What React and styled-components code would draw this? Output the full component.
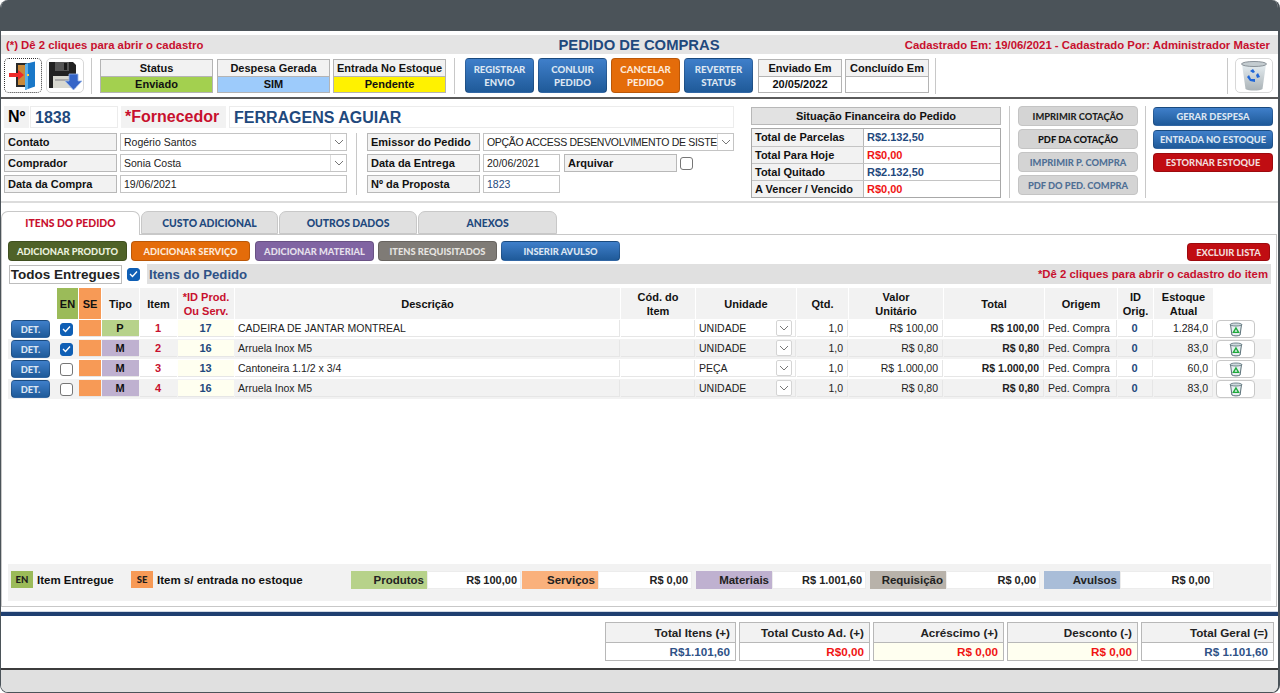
import React from 'react';
import styled, { createGlobalStyle } from 'styled-components';

const GlobalStyle = createGlobalStyle`
  html, body { margin: 0; padding: 0; background: #fff; }
  body { font-family: 'Liberation Sans', Arial, sans-serif; }
  * { box-sizing: border-box; }
`;

const Window = styled.div`
  width: 1280px;
  height: 693px;
  display: flex;
  flex-direction: column;
  overflow: hidden;
  background: #fff;
  border-left: 1px solid #4b5359;
  border-right: 2px solid #4b5359;
  border-bottom: 1px solid #4b5359;
  border-radius: 8px;
`;

const TopBar = styled.div`
  height: 31px;
  flex: none;
  background: #4b5359;
`;

const TitleBar = styled.div`
  height: 19px;
  margin-top: 4px;
  flex: none;
  display: grid;
  grid-template-columns: 1fr auto 1fr;
  align-items: center;
  padding: 0 8px 0 5px;
  background: #e4e4e4;
`;

const Hint = styled.span`
  color: #c8102e;
  font-size: 11.35px;
  font-weight: bold;
  text-align: ${p => p.$align || 'left'};
  white-space: nowrap;
`;

const Title = styled.span`
  color: #1f497d;
  font-size: 14.8px;
  font-weight: bold;
  margin-left: 2px;
`;

const Toolbar = styled.div`
  height: 45px;
  flex: none;
  display: flex;
  align-items: center;
  padding: 0 5px 0 3px;
  border-bottom: 2px solid #5a5a5a;
`;

const IconButton = styled.div`
  width: 38px;
  height: 35px;
  flex: none;
  display: flex;
  align-items: center;
  justify-content: center;
  margin-left: ${p => p.$ml || 0}px;
  border: ${p => (p.$dotted ? '1px dotted #333' : '1px solid #d8d8d8')};
  border-radius: 5px;
  background: #fff;
`;

const VSep = styled.div`
  width: 1px;
  flex: none;
  height: ${p => p.$h || 36}px;
  margin-left: ${p => p.$ml || 0}px;
  margin-right: ${p => p.$mr || 0}px;
  background: #c8c8c8;
`;

const StatusCard = styled.div`
  width: ${p => p.$w || 113}px;
  height: 34px;
  flex: none;
  margin-left: ${p => p.$ml || 0}px;
  display: flex;
  flex-direction: column;
  border: 1px solid #b4b4b4;
  font-size: 11px;
  font-weight: bold;
  color: #111;
  text-align: center;
`;

const StatusHead = styled.div`
  height: 17px;
  line-height: 16px;
  background: #f2f2f2;
  border-bottom: 1px solid #b4b4b4;
  white-space: nowrap;
`;

const StatusValue = styled.div`
  flex: 1;
  line-height: 15px;
  background: ${p => p.$bg || '#fff'};
`;

const GRADS = {
  blue: 'linear-gradient(#3f7fca, #1f5a99)',
  orange: '#e46c0a',
  red: '#c00d12',
  olive: '#4f6228',
  purple: '#8064a2',
  grey: '#7f7b76',
  light: '#d4d4d4',
};

const Btn = styled.div`
  width: ${p => p.$w}px;
  height: ${p => p.$h}px;
  flex: none;
  margin-left: ${p => p.$ml || 0}px;
  display: flex;
  align-items: center;
  justify-content: center;
  text-align: center;
  font-family: Lato, 'Open Sans', sans-serif;
  font-size: ${p => p.$fs || 9.3}px;
  font-weight: 900;
  line-height: 13px;
  white-space: nowrap;
  color: ${p => p.$color || '#dce6f2'};
  background: ${p => GRADS[p.$kind]};
  border: 1px solid ${p => (p.$kind === 'light' ? '#c4c4c4' : 'rgba(0,0,0,0.18)')};
  border-radius: 4px;
`;

const FormArea = styled.div`
  height: 104px;
  flex: none;
  display: flex;
  padding: 7px 0 0 3px;
  border-bottom: 2px solid #dcdcdc;
`;

const LeftForm = styled.div`
  width: 730px;
  flex: none;
  display: flex;
  flex-direction: column;
`;

const HeadRow = styled.div`
  height: 22px;
  display: flex;
  align-items: stretch;
`;

const BigLabel = styled.div`
  width: ${p => p.$w}px;
  flex: none;
  margin-left: ${p => p.$ml || 0}px;
  padding-left: ${p => p.$pl || 4}px;
  background: #f2f2f2;
  font-size: 16px;
  line-height: 22px;
  font-weight: bold;
  color: ${p => p.$color || '#000'};
  white-space: nowrap;
`;

const BigValue = styled.div`
  width: ${p => p.$w}px;
  flex: none;
  margin-left: ${p => p.$ml || 0}px;
  padding-left: 4px;
  border: 1px solid #ececec;
  font-size: 16px;
  line-height: 21px;
  font-weight: bold;
  color: #1f497d;
`;

const FormColumns = styled.div`
  margin-top: 5px;
  display: flex;
`;

const FieldColumn = styled.div`
  display: flex;
  flex-direction: column;
  gap: 3px;
`;

const FieldRow = styled.div`
  height: 18px;
  display: flex;
`;

const FieldLabel = styled.div`
  width: ${p => p.$w || 113}px;
  flex: none;
  margin-left: ${p => p.$ml || 0}px;
  padding-left: 3px;
  background: #f2f2f2;
  border: 1px solid #b8b8b8;
  font-size: 11px;
  line-height: 16px;
  font-weight: bold;
  color: #111;
  white-space: nowrap;
`;

const FieldValue = styled.div`
  width: ${p => p.$w}px;
  flex: none;
  margin-left: ${p => p.$ml ?? 3}px;
  padding-left: 3px;
  border: 1px solid #c4c4c4;
  background: #fff;
  font-size: 10.5px;
  line-height: 16px;
  color: ${p => p.$color || '#222'};
  white-space: nowrap;
  overflow: hidden;
  display: flex;
  justify-content: space-between;
`;

const ClipText = styled.span`
  white-space: nowrap;
  letter-spacing: ${p => (p.$tight ? '-0.3px' : 'normal')};
`;

const ComboBtn = styled.span`
  width: 16px;
  flex: none;
  display: flex;
  align-items: center;
  justify-content: center;
  background: #fff;
  border-left: 1px solid #dcdcdc;
`;

const Finance = styled.div`
  width: 250px;
  flex: none;
  margin-left: 17px;
  padding-top: 1px;
`;

const FinanceHead = styled.div`
  height: 18px;
  background: #e2e2e2;
  border: 1px solid #b8b8b8;
  text-align: center;
  font-size: 11px;
  font-weight: bold;
  line-height: 16px;
  color: #111;
`;

const FinanceTable = styled.div`
  margin-top: 3px;
  border: 1px solid #a8a8a8;
`;

const FinanceRow = styled.div`
  height: 17px;
  display: flex;
  border-top: ${p => (p.$first ? 'none' : '1px solid #c4c4c4')};
`;

const FinanceLabel = styled.div`
  width: 112px;
  flex: none;
  padding-left: 3px;
  background: #f2f2f2;
  border-right: 1px solid #b8b8b8;
  font-size: 11px;
  line-height: 16px;
  font-weight: bold;
  color: #111;
  white-space: nowrap;
`;

const FinanceValue = styled.div`
  flex: 1;
  padding-left: 3px;
  font-size: 11px;
  line-height: 16px;
  font-weight: bold;
  color: ${p => (p.$red ? '#f01414' : '#1f497d')};
`;

const ButtonStack = styled.div`
  display: flex;
  flex-direction: column;
  gap: ${p => p.$gap || 3}px;
  margin-left: ${p => p.$ml || 0}px;
  padding-top: ${p => p.$pt || 0}px;
`;

const Tabs = styled.div`
  height: 23px;
  margin-top: 8px;
  flex: none;
  display: flex;
  gap: 1px;
  position: relative;
  z-index: 1;
`;

const Tab = styled.div`
  width: ${p => p.$w}px;
  height: ${p => (p.$active ? 24 : 23)}px;
  text-align: center;
  font-family: Lato, 'Open Sans', sans-serif;
  font-size: 10.4px;
  font-weight: 900;
  line-height: 22px;
  color: ${p => (p.$active ? '#c8102e' : '#1f497d')};
  background: ${p => (p.$active ? '#fff' : '#e0e0e0')};
  border: 1px solid #c8c8c8;
  border-bottom: ${p => (p.$active ? 'none' : '1px solid #c8c8c8')};
  border-radius: 7px 7px 0 0;
`;

const Panel = styled.div`
  height: 373px;
  flex: none;
  margin-right: 1px;
  display: flex;
  flex-direction: column;
  padding: 6px 5px 5px 6px;
  border: 1px solid #c8c8c8;
`;

const ButtonRow = styled.div`
  height: 20px;
  flex: none;
  display: flex;
  align-items: flex-end;
`;

const SectionRow = styled.div`
  height: 20px;
  margin-top: 3px;
  flex: none;
  display: flex;
  align-items: center;
  padding-left: 1px;
`;

const TodosBox = styled.div`
  width: 113px;
  height: 19px;
  flex: none;
  text-align: center;
  font-size: 13.5px;
  font-weight: bold;
  line-height: 17px;
  color: #222;
  border: 1px solid #bdbdbd;
`;

const SectionBar = styled.div`
  flex: 1;
  height: 20px;
  margin-left: 7px;
  padding: 0 3px 0 2px;
  display: flex;
  align-items: center;
  justify-content: space-between;
  background: #e0e0e0;
`;

const SectionTitle = styled.span`
  font-size: 13.2px;
  font-weight: bold;
  color: #2f5287;
`;

const COLS = '49px 22px 23px 38px 38px 57px 386px 75px 101px 52px 95px 101px 73px 36px 60px 56px';

const HeadGrid = styled.div`
  display: grid;
  grid-template-columns: ${COLS};
  height: 31px;
  margin-top: 4px;
  flex: none;
`;

const HeadCell = styled.div`
  display: flex;
  align-items: center;
  justify-content: center;
  text-align: center;
  margin-right: 1px;
  padding: 0 1px;
  font-size: 11px;
  line-height: 14px;
  font-weight: bold;
  color: ${p => p.$color || '#111'};
  background: ${p => p.$bg || '#f2f2f2'};
`;

const RowGrid = styled.div`
  display: grid;
  grid-template-columns: ${COLS};
  height: 20px;
  flex: none;
  padding: 1px 0 2px;
  background: ${p => (p.$alt ? '#f2f2f2' : '#fff')};
`;

const Cell = styled.div`
  display: flex;
  align-items: center;
  justify-content: ${p => p.$justify || 'flex-start'};
  margin-right: 1px;
  padding: 0 4px 0 3px;
  overflow: hidden;
  white-space: nowrap;
  font-size: ${p => p.$fs || 10.5}px;
  font-weight: ${p => (p.$bold ? 'bold' : 'normal')};
  color: ${p => p.$color || '#222'};
  background: ${p => p.$bg || 'transparent'};
  border-bottom: 1px solid #e6e6e6;
  border-right: ${p => (p.$line ? '1px solid #e6e6e6' : 'none')};
`;

const PlainCell = styled.div`
  display: flex;
  align-items: center;
  justify-content: ${p => p.$justify || 'flex-start'};
  padding-left: ${p => p.$pl || 0}px;
  margin-top: -1px;
  margin-bottom: -2px;
`;

const TrashBtn = styled.div`
  width: 39px;
  height: 18px;
  margin-left: 2px;
  display: flex;
  align-items: center;
  justify-content: center;
  background: #fff;
  border: 1px solid #c8c8c8;
  border-radius: 4px;
`;

const CheckShell = styled.div`
  width: 13px;
  height: 13px;
  flex: none;
  margin-left: ${p => p.$ml || 0}px;
  display: flex;
  align-items: center;
  justify-content: center;
  border-radius: 3px;
  background: ${p => (p.$on ? '#0f5fb5' : '#fff')};
  border: 1px solid ${p => (p.$on ? '#0f5fb5' : '#767676')};
`;

const CheckWrap = styled.div`
  margin-left: 3px;
  display: flex;
  align-items: center;
`;

const ComboMini = styled.span`
  width: 16px;
  height: 16px;
  flex: none;
  margin-left: auto;
  margin-right: -1px;
  display: flex;
  align-items: center;
  justify-content: center;
  background: #fff;
  border: 1px solid #d4d4d4;
  border-radius: 2px;
`;

const Legend = styled.div`
  height: 37px;
  margin-top: auto;
  flex: none;
  display: flex;
  align-items: center;
  padding: 0 0 6px 3px;
  background: #f2f2f2;
`;

const LegendChip = styled.div`
  width: 22px;
  height: 17px;
  flex: none;
  text-align: center;
  font-family: Lato, sans-serif;
  font-size: 9.5px;
  font-weight: 900;
  line-height: 17px;
  color: #1d1d1d;
  background: ${p => p.$bg};
`;

const LegendText = styled.span`
  margin-left: 4px;
  width: ${p => p.$w}px;
  flex: none;
  font-size: 11.5px;
  font-weight: bold;
  color: #111;
  white-space: nowrap;
`;

const SumLabel = styled.div`
  width: 76px;
  height: 18px;
  flex: none;
  margin-left: ${p => p.$ml || 0}px;
  padding-right: 3px;
  text-align: right;
  font-size: 11.5px;
  line-height: 18px;
  font-weight: bold;
  color: #222;
  background: ${p => p.$bg};
`;

const SumValue = styled.div`
  width: 94px;
  height: 18px;
  flex: none;
  padding-right: 3px;
  text-align: right;
  font-size: 11px;
  line-height: 17px;
  font-weight: bold;
  color: #222;
  background: #fff;
  border: 1px solid #ececec;
`;

const BlueLine = styled.div`
  height: 5px;
  margin-top: 4px;
  flex: none;
  background: #1f3f70;
  border-top: 1px solid #d0d8e4;
`;

const TotalsRow = styled.div`
  height: 54px;
  flex: none;
  display: flex;
  gap: 3px;
  padding: 6px 0 0 604px;
  border-bottom: 2px solid #3c3c3c;
`;

const TotalBox = styled.div`
  width: ${p => p.$w || 131}px;
  height: 39px;
  flex: none;
  display: flex;
  flex-direction: column;
  border: 1px solid #b8b8b8;
  text-align: right;
`;

const TotalHead = styled.div`
  height: 20px;
  padding-right: 5px;
  background: #f2f2f2;
  border-bottom: 1px solid #b8b8b8;
  font-size: 11.7px;
  line-height: 19px;
  font-weight: bold;
  color: #222;
`;

const TotalValue = styled.div`
  flex: 1;
  padding-right: 5px;
  background: ${p => p.$bg || '#fff'};
  font-size: 11.7px;
  line-height: 17px;
  font-weight: bold;
  color: ${p => (p.$red ? '#f01414' : '#2f5287')};
`;

const Footer = styled.div`
  flex: 1;
  background: #e0e0e0;
`;

const Chevron = () => (
  <svg width="10" height="6" viewBox="0 0 10 6">
    <path d="M1 1l4 4 4-4" fill="none" stroke="#777" strokeWidth="1" />
  </svg>
);

const Check = ({ on, ml }) => (
  <CheckShell $on={on} $ml={ml}>
    {on && (
      <svg width="9" height="8" viewBox="0 0 9 8">
        <path d="M1 4l2.5 2.5L8 1.5" fill="none" stroke="#fff" strokeWidth="1.3" />
      </svg>
    )}
  </CheckShell>
);

const DoorIcon = () => (
  <svg width="32" height="31" viewBox="0 0 32 31">
    <rect x="9" y="3" width="18" height="24" fill="#2a2a2a" />
    <rect x="11" y="5" width="8" height="20" fill="#c98a3a" />
    <path d="M18 4l10-2.5v25L18 30z" fill="#1a78c8" />
    <path d="M18 4l3-.8v25.6L18 30z" fill="#5ab0ea" />
    <rect x="20" y="14" width="2" height="2" fill="#ffd34d" />
    <path d="M2 13h9V10l6 5-6 5v-3H2z" fill="#ee2a2a" />
  </svg>
);

const SaveIcon = () => (
  <svg width="35" height="32" viewBox="0 0 35 32">
    <path d="M1 2h24l3 3v23H1z" fill="#222" />
    <rect x="7" y="2" width="14" height="9" fill="#555" />
    <rect x="16" y="3" width="3" height="7" fill="#1a1a1a" />
    <rect x="5" y="16" width="20" height="12" fill="#d8d8d0" />
    <rect x="7" y="19" width="14" height="2" fill="#aaa" />
    <path d="M21 14h9v7h4l-8.5 9-8.5-9h4z" fill="#3565c8" stroke="#9db8ea" strokeWidth="0.8" />
  </svg>
);

const BinIcon = () => (
  <svg width="28" height="32" viewBox="0 0 28 32">
    <defs>
      <linearGradient id="binBody" x1="0" x2="0" y1="0" y2="1">
        <stop offset="0" stopColor="#e6eef2" />
        <stop offset="1" stopColor="#aab2b6" />
      </linearGradient>
    </defs>
    <path d="M2 4l3.5 25c3 2 14 2 17 0L26 4z" fill="url(#binBody)" />
    <ellipse cx="14" cy="4" rx="12.5" ry="2.5" fill="#c4ccd0" stroke="#8a9298" strokeWidth="1" />
    <path d="M10 11l3-2 2 3-2 1zM18 13l2 4-3 1-1-3zM9 15l2 4h4v3l-5-1-3-4z" fill="#1f66d8" />
  </svg>
);

const SmallBin = () => (
  <svg width="14" height="15" viewBox="0 0 14 15">
    <path d="M1.5 2.5l1.4 10.5c2 1.2 6.2 1.2 8.2 0l1.4-10.5z" fill="#e6eef0" stroke="#5a7078" strokeWidth="1" />
    <ellipse cx="7" cy="2.5" rx="5.8" ry="1.5" fill="#cfdadd" stroke="#5a7078" strokeWidth="0.8" />
    <path d="M7 6l2.6 4.4H4.4z" fill="none" stroke="#1faa3c" strokeWidth="1.4" />
  </svg>
);

const items = [
  { tipo: 'P', bg: '#b7d28a', n: 1, id: 17, desc: 'CADEIRA DE JANTAR MONTREAL', un: 'UNIDADE', vu: 'R$ 100,00', tot: 'R$ 100,00', est: '1.284,0', on: true },
  { tipo: 'M', bg: '#bfb1d0', n: 2, id: 16, desc: 'Arruela Inox M5', un: 'UNIDADE', vu: 'R$ 0,80', tot: 'R$ 0,80', est: '83,0', on: true },
  { tipo: 'M', bg: '#bfb1d0', n: 3, id: 13, desc: 'Cantoneira 1.1/2 x 3/4', un: 'PEÇA', vu: 'R$ 1.000,00', tot: 'R$ 1.000,00', est: '60,0', on: false },
  { tipo: 'M', bg: '#bfb1d0', n: 4, id: 16, desc: 'Arruela Inox M5', un: 'UNIDADE', vu: 'R$ 0,80', tot: 'R$ 0,80', est: '83,0', on: false },
];

function ItemRow({ item, alt }) {
  return (
    <RowGrid $alt={alt}>
      <PlainCell $pl={3}>
        <Btn $kind="blue" $w={39} $h={18}>DET.</Btn>
      </PlainCell>
      <PlainCell $pl={3}><Check on={item.on} /></PlainCell>
      <Cell $bg="#f79a56" />
      <Cell $bg={item.bg} $bold $justify="center" $fs={11} $color="#111">{item.tipo}</Cell>
      <Cell $bold $justify="center" $color="#c8102e" $fs={11}>{item.n}</Cell>
      <Cell $bg="#fffff0" $bold $justify="center" $color="#1f497d" $fs={11}>{item.id}</Cell>
      <Cell $line>{item.desc}</Cell>
      <Cell $line />
      <Cell $line>
        <ClipText>{item.un}</ClipText>
        <ComboMini><Chevron /></ComboMini>
      </Cell>
      <Cell $line $justify="flex-end">1,0</Cell>
      <Cell $line $justify="flex-end">{item.vu}</Cell>
      <Cell $line $justify="flex-end" $bold>{item.tot}</Cell>
      <Cell $line>Ped. Compra</Cell>
      <Cell $line $bold $justify="center" $color="#1f497d" $fs={11}>0</Cell>
      <Cell $line $justify="flex-end">{item.est}</Cell>
      <PlainCell><TrashBtn><SmallBin /></TrashBtn></PlainCell>
    </RowGrid>
  );
}

export default function App() {
  return (
    <>
      <GlobalStyle />
      <Window>
        <TopBar />
        <TitleBar>
          <Hint>(*) Dê 2 cliques para abrir o cadastro</Hint>
          <Title>PEDIDO DE COMPRAS</Title>
          <Hint $align="right">Cadastrado Em: 19/06/2021 - Cadastrado Por: Administrador Master</Hint>
        </TitleBar>

        <Toolbar>
          <IconButton $dotted><DoorIcon /></IconButton>
          <IconButton $ml={4}><SaveIcon /></IconButton>
          <VSep $ml={7} />
          <StatusCard $ml={8}>
            <StatusHead>Status</StatusHead>
            <StatusValue $bg="#a3d04f">Enviado</StatusValue>
          </StatusCard>
          <StatusCard $ml={4}>
            <StatusHead>Despesa Gerada</StatusHead>
            <StatusValue $bg="#9dcbfb">SIM</StatusValue>
          </StatusCard>
          <StatusCard $ml={3}>
            <StatusHead>Entrada No Estoque</StatusHead>
            <StatusValue $bg="#fff200">Pendente</StatusValue>
          </StatusCard>
          <VSep $ml={8} />
          <Btn $kind="blue" $w={69} $h={35} $ml={10} $fs={9.6}>REGISTRAR<br />ENVIO</Btn>
          <Btn $kind="blue" $w={69} $h={35} $ml={4} $fs={9.6}>CONLUIR<br />PEDIDO</Btn>
          <Btn $kind="orange" $w={69} $h={35} $ml={4} $fs={9.6} $color="#fde9d9">CANCELAR<br />PEDIDO</Btn>
          <Btn $kind="blue" $w={69} $h={35} $ml={4} $fs={9.6}>REVERTER<br />STATUS</Btn>
          <StatusCard $w={84} $ml={5}>
            <StatusHead>Enviado Em</StatusHead>
            <StatusValue>20/05/2022</StatusValue>
          </StatusCard>
          <StatusCard $w={84} $ml={3}>
            <StatusHead>Concluído Em</StatusHead>
            <StatusValue />
          </StatusCard>
          <VSep $ml={6} />
          <VSep $ml={291} />
          <IconButton $ml={7}><BinIcon /></IconButton>
        </Toolbar>

        <FormArea>
          <LeftForm>
            <HeadRow>
              <BigLabel $w={25}>Nº</BigLabel>
              <BigValue $w={88} $ml={1}>1838</BigValue>
              <BigLabel $w={105} $ml={3} $color="#c8102e">*Fornecedor</BigLabel>
              <BigValue $w={505} $ml={3}>FERRAGENS AGUIAR</BigValue>
            </HeadRow>
            <FormColumns>
              <FieldColumn>
                <FieldRow>
                  <FieldLabel>Contato</FieldLabel>
                  <FieldValue $w={227}>
                    <ClipText>Rogério Santos</ClipText>
                    <ComboBtn><Chevron /></ComboBtn>
                  </FieldValue>
                </FieldRow>
                <FieldRow>
                  <FieldLabel>Comprador</FieldLabel>
                  <FieldValue $w={227}>
                    <ClipText>Sonia Costa</ClipText>
                    <ComboBtn><Chevron /></ComboBtn>
                  </FieldValue>
                </FieldRow>
                <FieldRow>
                  <FieldLabel>Data da Compra</FieldLabel>
                  <FieldValue $w={227}>19/06/2021</FieldValue>
                </FieldRow>
              </FieldColumn>
              <VSep $h={62} $ml={9} $mr={10} />
              <FieldColumn>
                <FieldRow>
                  <FieldLabel>Emissor do Pedido</FieldLabel>
                  <FieldValue $w={251}>
                    <ClipText $tight>OPÇÃO ACCESS DESENVOLVIMENTO DE SISTE</ClipText>
                    <ComboBtn><Chevron /></ComboBtn>
                  </FieldValue>
                </FieldRow>
                <FieldRow>
                  <FieldLabel>Data da Entrega</FieldLabel>
                  <FieldValue $w={77}>20/06/2021</FieldValue>
                  <FieldLabel $ml={4}>Arquivar</FieldLabel>
                  <CheckWrap><Check /></CheckWrap>
                </FieldRow>
                <FieldRow>
                  <FieldLabel>Nº da Proposta</FieldLabel>
                  <FieldValue $w={77} $color="#1f497d">1823</FieldValue>
                </FieldRow>
              </FieldColumn>
            </FormColumns>
          </LeftForm>

          <Finance>
            <FinanceHead>Situação Financeira do Pedido</FinanceHead>
            <FinanceTable>
              <FinanceRow $first>
                <FinanceLabel>Total de Parcelas</FinanceLabel>
                <FinanceValue>R$2.132,50</FinanceValue>
              </FinanceRow>
              <FinanceRow>
                <FinanceLabel>Total Para Hoje</FinanceLabel>
                <FinanceValue $red>R$0,00</FinanceValue>
              </FinanceRow>
              <FinanceRow>
                <FinanceLabel>Total Quitado</FinanceLabel>
                <FinanceValue>R$2.132,50</FinanceValue>
              </FinanceRow>
              <FinanceRow>
                <FinanceLabel>A Vencer / Vencido</FinanceLabel>
                <FinanceValue $red>R$0,00</FinanceValue>
              </FinanceRow>
            </FinanceTable>
          </Finance>
          <VSep $h={92} $ml={8} />
          <ButtonStack $ml={8}>
            <Btn $kind="light" $w={120} $h={20} $color="#1f1f1f">IMPRIMIR COTAÇÃO</Btn>
            <Btn $kind="light" $w={120} $h={20} $color="#111">PDF DA COTAÇÃO</Btn>
            <Btn $kind="light" $w={120} $h={20} $color="#4f6f94">IMPRIMIR P. COMPRA</Btn>
            <Btn $kind="light" $w={120} $h={20} $color="#4f6f94">PDF DO PED. COMPRA</Btn>
          </ButtonStack>
          <VSep $h={92} $ml={7} />
          <ButtonStack $ml={7} $pt={1} $gap={4}>
            <Btn $kind="blue" $w={120} $h={19}>GERAR DESPESA</Btn>
            <Btn $kind="blue" $w={120} $h={19}>ENTRADA NO ESTOQUE</Btn>
            <Btn $kind="red" $w={120} $h={19} $color="#f2dcdb">ESTORNAR ESTOQUE</Btn>
          </ButtonStack>
        </FormArea>

        <Tabs>
          <Tab $w={139} $active>ITENS DO PEDIDO</Tab>
          <Tab $w={137}>CUSTO ADICIONAL</Tab>
          <Tab $w={138}>OUTROS DADOS</Tab>
          <Tab $w={139}>ANEXOS</Tab>
        </Tabs>

        <Panel>
          <ButtonRow>
            <Btn $kind="olive" $w={119} $h={20} $color="#ebf1de">ADICIONAR PRODUTO</Btn>
            <Btn $kind="orange" $w={119} $h={20} $ml={4} $color="#fde9d9">ADICIONAR SERVIÇO</Btn>
            <Btn $kind="purple" $w={119} $h={20} $ml={5} $color="#e6e0ec">ADICIONAR MATERIAL</Btn>
            <Btn $kind="grey" $w={119} $h={20} $ml={4} $color="#e6e4e0">ITENS REQUISITADOS</Btn>
            <Btn $kind="blue" $w={119} $h={20} $ml={4}>INSERIR AVULSO</Btn>
            <Btn $kind="red" $w={83} $h={18} $ml={567} $color="#f2dcdb">EXCLUIR LISTA</Btn>
          </ButtonRow>
          <SectionRow>
            <TodosBox>Todos Entregues</TodosBox>
            <Check on ml={5} />
            <SectionBar>
              <SectionTitle>Itens do Pedido</SectionTitle>
              <Hint $align="right">*Dê 2 cliques para abrir o cadastro do item</Hint>
            </SectionBar>
          </SectionRow>

          <HeadGrid>
            <HeadCell $bg="#fff" />
            <HeadCell $bg="#9bbb59">EN</HeadCell>
            <HeadCell $bg="#f79a56">SE</HeadCell>
            <HeadCell>Tipo</HeadCell>
            <HeadCell>Item</HeadCell>
            <HeadCell $color="#c8102e">*ID Prod.<br />Ou Serv.</HeadCell>
            <HeadCell>Descrição</HeadCell>
            <HeadCell>Cód. do<br />Item</HeadCell>
            <HeadCell>Unidade</HeadCell>
            <HeadCell>Qtd.</HeadCell>
            <HeadCell>Valor<br />Unitário</HeadCell>
            <HeadCell>Total</HeadCell>
            <HeadCell>Origem</HeadCell>
            <HeadCell>ID<br />Orig.</HeadCell>
            <HeadCell>Estoque<br />Atual</HeadCell>
            <HeadCell $bg="#fff" />
          </HeadGrid>
          {items.map((item, i) => (
            <ItemRow key={item.n} item={item} alt={i % 2 === 1} />
          ))}

          <Legend>
            <LegendChip $bg="#9bbb59">EN</LegendChip>
            <LegendText $w={94}>Item Entregue</LegendText>
            <LegendChip $bg="#f79a56">SE</LegendChip>
            <LegendText $w={194}>Item s/ entrada no estoque</LegendText>
            <SumLabel $bg="#b7d28a">Produtos</SumLabel>
            <SumValue>R$ 100,00</SumValue>
            <SumLabel $bg="#fab17c" $ml={1}>Serviços</SumLabel>
            <SumValue>R$ 0,00</SumValue>
            <SumLabel $bg="#bfb1d0" $ml={4}>Materiais</SumLabel>
            <SumValue>R$ 1.001,60</SumValue>
            <SumLabel $bg="#b8b2aa" $ml={4}>Requisição</SumLabel>
            <SumValue>R$ 0,00</SumValue>
            <SumLabel $bg="#a9bdd8" $ml={4}>Avulsos</SumLabel>
            <SumValue>R$ 0,00</SumValue>
          </Legend>
        </Panel>

        <BlueLine />
        <TotalsRow>
          <TotalBox>
            <TotalHead>Total Itens (+)</TotalHead>
            <TotalValue>R$1.101,60</TotalValue>
          </TotalBox>
          <TotalBox>
            <TotalHead>Total Custo Ad. (+)</TotalHead>
            <TotalValue $red>R$0,00</TotalValue>
          </TotalBox>
          <TotalBox>
            <TotalHead>Acréscimo (+)</TotalHead>
            <TotalValue $red $bg="#fffff0">R$ 0,00</TotalValue>
          </TotalBox>
          <TotalBox>
            <TotalHead>Desconto (-)</TotalHead>
            <TotalValue $red $bg="#fffff0">R$ 0,00</TotalValue>
          </TotalBox>
          <TotalBox $w={133}>
            <TotalHead>Total Geral (=)</TotalHead>
            <TotalValue>R$ 1.101,60</TotalValue>
          </TotalBox>
        </TotalsRow>
        <Footer />
      </Window>
    </>
  );
}
